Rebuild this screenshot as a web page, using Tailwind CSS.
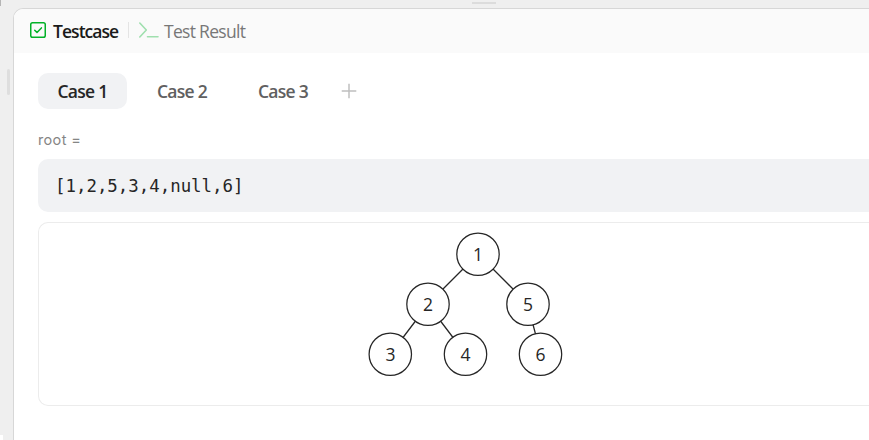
<!DOCTYPE html>
<html lang="en">
<head>
<meta charset="utf-8">
<title>Testcase</title>
<script src="https://cdn.jsdelivr.net/npm/@tailwindcss/browser@4"></script>
</head>
<body class="relative h-[440px] overflow-hidden bg-[#efefef] pt-2 pl-[13px] font-['Open_Sans','Noto_Sans',sans-serif]">
<div class="absolute left-0 top-0 h-[6px] w-px bg-[#b5b5b5]"></div>
<div class="absolute left-0 top-[435px] h-[5px] w-[3px] bg-white"></div>
<div class="absolute left-[7px] top-[69px] h-[26px] w-[3px] rounded-full bg-[#dedede]"></div>
<div class="absolute left-[472px] top-[2px] h-[2px] w-6 bg-[#dcdcdc]"></div>
<main class="h-[432px] overflow-hidden rounded-tl-[10px] border-l border-t border-[#d7d7d7] bg-white">
  <header class="flex h-11 items-center bg-[#fafafa] pl-4">
    <svg class="size-4 shrink-0 -translate-y-px" viewBox="0 0 16 16" fill="none" stroke="#02b128" stroke-width="1.5" stroke-linecap="round" stroke-linejoin="round"><rect x=".75" y=".75" width="14.5" height="14.5" rx="1.8"/><path d="M4.7 8.2 7 10.4l4.4-4.5"/></svg>
    <span class="ml-[7px] w-[75px] whitespace-nowrap pt-px text-[17.5px] font-semibold tracking-[-0.95px] text-[#1a1a1a]">Testcase</span>
    <span class="h-4 w-px -translate-y-px bg-[#e4e4e4]"></span>
    <svg class="ml-[9px] h-4 w-[21px] shrink-0 -translate-y-px" viewBox="0 0 21 16" fill="none" stroke="#9fdfae" stroke-width="1.6" stroke-linecap="round" stroke-linejoin="round"><path d="M1.800 1l6.500 7L1.800 15M9.500 14.800h10.500"/></svg>
    <span class="ml-[5px] whitespace-nowrap pt-px text-[17.5px] tracking-[-0.7px] text-[#777]">Test Result</span>
  </header>
  <section class="pl-6 pt-5">
    <nav class="flex h-9 items-center text-[17.5px] font-semibold tracking-[-0.7px] text-[#606060]">
      <span class="flex h-9 w-[89px] items-center justify-center rounded-[10px] bg-[#f1f2f4] pt-px text-[#262626]">Case 1</span>
      <span class="ml-[11px] w-[88px] pt-px text-center">Case 2</span>
      <span class="ml-[13px] w-[88px] pt-px text-center">Case 3</span>
      <svg class="ml-[14px] size-4" viewBox="0 0 16 16" stroke="#bfbfbf" stroke-width="1.5"><path d="M.7 8h14.6M8 .7v14.6"/></svg>
    </nav>
    <div class="mt-5 h-[22px] text-[14.5px] leading-[22px] tracking-[0.35px] text-[#858585] font-['Inter',sans-serif]">root =</div>
    <div class="mt-2 flex h-[53px] items-center rounded-l-[10px] bg-[#f1f2f4] pl-[17px] pt-px text-[17.4px] text-[#262626] font-['DejaVu_Sans_Mono',monospace]">[1,2,5,3,4,null,6]</div>
    <div class="mt-[10px] h-[184px] rounded-l-[10px] border-y border-l border-[#ececec]">
      <svg class="ml-[329px] mt-[8px] block h-[148px] w-[196px] font-['Open_Sans','Noto_Sans',sans-serif]" viewBox="368 231 196 148">
        <g fill="none" stroke="#262626" stroke-width="1.25"><path d="M463 269l-20 20M493 269l20 20M415.5 321l-12.500 16.500M440.500 321l12.500 16.500M533 324.500l2.500 9.500"/><circle cx="478" cy="254.200" r="21.200"/><circle cx="428" cy="304.200" r="21.200"/><circle cx="528" cy="304.200" r="21.200"/><circle cx="390.300" cy="354.200" r="21.200"/><circle cx="465.500" cy="354.200" r="21.200"/><circle cx="540.500" cy="354.200" r="21.200"/></g>
        <g fill="#262626" font-size="17.5" text-anchor="middle"><text x="478" y="261">1</text><text x="428" y="311">2</text><text x="528" y="311">5</text><text x="390.500" y="361">3</text><text x="465.500" y="361">4</text><text x="540.500" y="361">6</text></g>
      </svg>
    </div>
  </section>
</main>
</body>
</html>
